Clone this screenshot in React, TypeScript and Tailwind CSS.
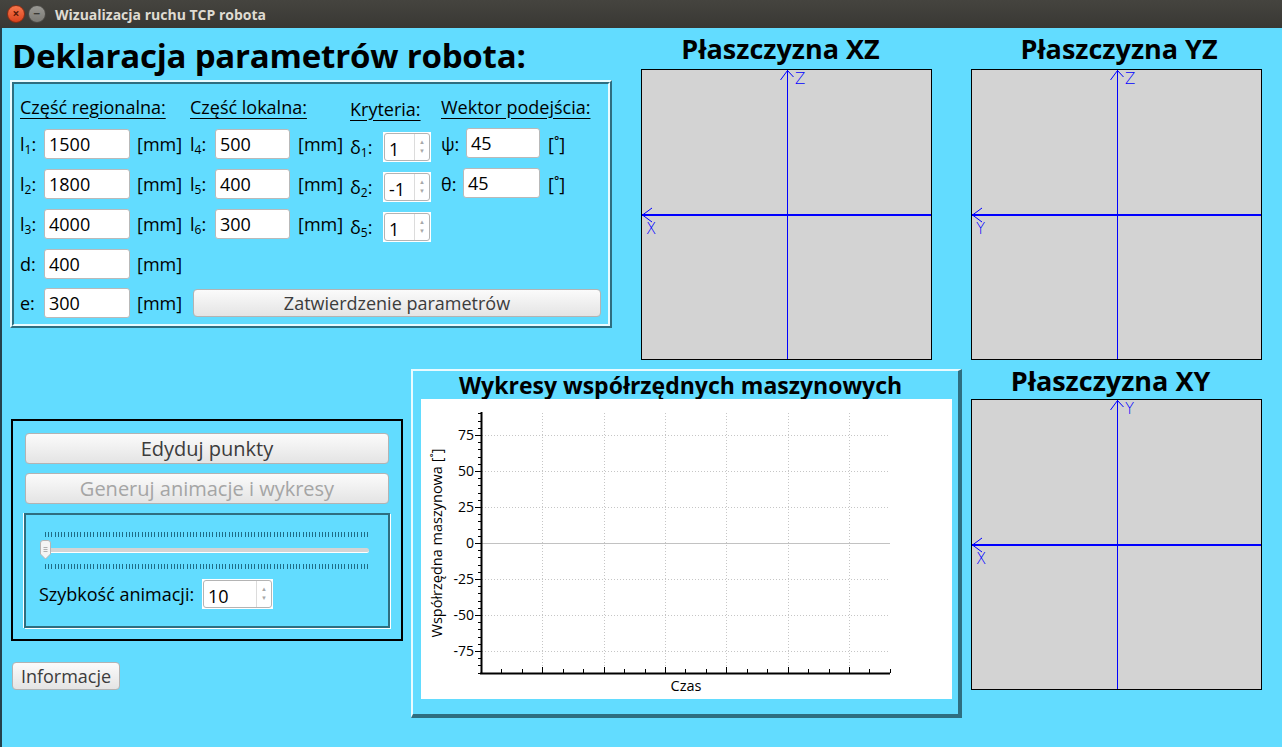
import React from "react";

function Field({ value, className }: { value: string; className: string }) {
  return (
    <div
      className={`h-[30px] bg-white border border-[#b9b9b9] rounded-[3px] pl-[4px] flex items-center text-[18px] text-black ${className}`}
    >
      {value}
    </div>
  );
}

function Spin({ value, className }: { value: string; className: string }) {
  return (
    <div className={`h-[30px] bg-white border border-white flex ${className}`}>
      <div className="flex-1 flex border border-[#b4b4b4] rounded-[3px]">
        <div className="flex-1 flex items-end pb-[2px] pl-[4px] text-[18px] text-black leading-none">{value}</div>
        <div className="w-[15px] border-l border-[#dcdcdc] flex flex-col items-center justify-center text-[#a8a8a8] text-[6px] leading-[9px]">
          <span>▲</span>
          <span>▼</span>
        </div>
      </div>
    </div>
  );
}

function Button({ children, className, disabled }: { children: React.ReactNode; className: string; disabled?: boolean }) {
  return (
    <div
      className={`flex items-center justify-center rounded-[4px] border border-[#b3b3b3] bg-gradient-to-b from-[#fbfbfb] to-[#e4e4e4] ${
        disabled ? "text-[#a5a5a5]" : "text-[#3c3c3c]"
      } ${className}`}
    >
      {children}
    </div>
  );
}

function Sub({ base, sub }: { base: string; sub: string }) {
  return (
    <span>
      {base}
      <sub className="text-[12px] align-baseline relative top-[3px]">{sub}</sub>:
    </span>
  );
}

function Plane({ title, h, v, titleH }: { title: string; h: string; v: string; titleH: string }) {
  const blue = "#0000ff";
  return (
    <div className="w-[291px] flex flex-col">
      <div className={`${titleH} flex items-center justify-center text-[27px] font-bold text-black leading-none`}>{title}</div>
      <div className="h-[291px] border border-black bg-[#d3d3d3]">
        <svg width="289" height="289" className="block">
          <line x1="145.5" y1="0" x2="145.5" y2="289" stroke={blue} strokeWidth="1" />
          <line x1="0" y1="145" x2="289" y2="145" stroke={blue} strokeWidth="2" />
          <polyline points="138.5,10 145.5,0.5 151.5,7" fill="none" stroke={blue} strokeWidth="1" />
          <polyline points="10,138 0.5,145 10,152" fill="none" stroke={blue} strokeWidth="1" />
          <text x="153" y="14" fontSize="15" fill={blue} fontFamily="'DejaVu Sans', sans-serif" fontWeight="200">
            {v}
          </text>
          <text x="4" y="164" fontSize="15" fill={blue} fontFamily="'DejaVu Sans', sans-serif" fontWeight="200">
            {h}
          </text>
        </svg>
      </div>
    </div>
  );
}

function Ticks() {
  const xs = Array.from({ length: 101 }, (_, i) => Math.round(i * 3.22) + 0.5);
  return (
    <svg width="324" height="5" className="block">
      {xs.map((x, i) => (
        <line key={i} x1={x} y1="0" x2={x} y2="5" stroke="#1f6c86" strokeWidth="1" />
      ))}
    </svg>
  );
}

function Chart() {
  const yOf = (v: number) => 144 - v * 1.44;
  const minorY = Array.from({ length: 37 }, (_, i) => -90 + i * 5);
  const majors = [75, 50, 25, 0, -25, -50, -75];
  const step = 61.33;
  const minorX = Array.from({ length: 21 }, (_, i) => 60 + (i * step) / 3);
  return (
    <svg width="531" height="300" className="block">
      {[75, 50, 25, -25, -50, -75].map((v) => (
        <line key={v} x1="61" y1={yOf(v) + 0.5} x2="469" y2={yOf(v) + 0.5} stroke="#c6c6c6" strokeDasharray="1 2" />
      ))}
      {[1, 2, 3, 4, 5, 6].map((k) => (
        <line key={k} x1={Math.round(60 + k * step) + 0.5} y1="14" x2={Math.round(60 + k * step) + 0.5} y2="273" stroke="#c6c6c6" strokeDasharray="1 2" />
      ))}
      <line x1="61" y1="144.5" x2="469" y2="144.5" stroke="#c2c2c2" strokeWidth="1" />
      {minorY.map((v) => (
        <line key={v} x1={v % 25 === 0 ? 54 : 57} y1={Math.round(yOf(v)) + 0.5} x2="60" y2={Math.round(yOf(v)) + 0.5} stroke="#000" />
      ))}
      {minorX.map((x, i) => (
        <line key={i} x1={Math.round(x) + 0.5} y1={i % 3 === 0 ? 268 : 270} x2={Math.round(x) + 0.5} y2="274" stroke="#000" />
      ))}
      <line x1="60.5" y1="13" x2="60.5" y2="275" stroke="#000" strokeWidth="2" />
      <line x1="59" y1="274.5" x2="469" y2="274.5" stroke="#000" strokeWidth="2" />
      {majors.map((v) => (
        <text key={v} x="53" y={yOf(v) + 5} fontSize="14" textAnchor="end" fill="#000" fontFamily="'Open Sans', sans-serif">
          {v}
        </text>
      ))}
      <text x="265" y="292" fontSize="14.5" textAnchor="middle" fill="#000" fontFamily="'Open Sans', sans-serif">
        Czas
      </text>
      <text
        x="0"
        y="0"
        fontSize="14.5"
        textAnchor="middle"
        fill="#000"
        fontFamily="'Open Sans', sans-serif"
        transform="translate(21 144) rotate(-90)"
      >
        Współrzędna maszynowa [˚]
      </text>
    </svg>
  );
}

export default function App() {
  return (
    <div className="w-[1282px] h-[747px] bg-[#62dcff] font-['Open_Sans','Noto_Sans',sans-serif] overflow-hidden flex flex-col shadow-[inset_2px_0_0_#24414c]">
      {/* Title bar */}
      <div className="h-[28px] shrink-0 bg-gradient-to-b from-[#45443f] to-[#393834] flex items-center pl-[7px]">
        <div className="w-[18px] h-[18px] rounded-full bg-gradient-to-b from-[#f7774c] to-[#d9421c] border border-[#8d2c12] flex items-center justify-center text-[#5a1a08] text-[12px] leading-none font-bold">
          ×
        </div>
        <div className="w-[18px] h-[18px] ml-[3px] rounded-full bg-gradient-to-b from-[#9a9994] to-[#7a7974] border border-[#4a4945] flex items-center justify-center text-[#3a3935] text-[12px] leading-none font-bold">
          −
        </div>
        <div className="ml-[9px] text-[14px] font-bold text-[#dfdbd2]">Wizualizacja ruchu TCP robota</div>
      </div>

      {/* Top row */}
      <div className="flex items-start pl-[10px]">
        <div className="w-[602px] flex flex-col">
          <div className="h-[52px] pl-[2px] pt-[8px] text-[33px] font-bold text-black leading-[40px] tracking-[-0.2px]">
            Deklaracja parametrów robota:
          </div>
          <div className="border-2 border-t-[#e9fbff] border-l-[#e9fbff] border-r-[#2e6e80] border-b-[#2e6e80]">
            <div className="h-[244px] border-2 border-t-[#2e6e80] border-l-[#2e6e80] border-r-[#e9fbff] border-b-[#e9fbff] pl-[6px] text-[18px] text-black flex flex-col">
              <div className="flex mt-[11px] h-[24px] items-center">
                <span className="w-[170px]"><span className="underline underline-offset-[4px]">Część regionalna:</span></span>
                <span className="w-[160px]"><span className="underline underline-offset-[4px]">Część lokalna:</span></span>
                <span className="w-[91px] pt-[4px]"><span className="underline underline-offset-[4px]">Kryteria:</span></span>
                <span><span className="underline underline-offset-[4px]">Wektor podejścia:</span></span>
              </div>
              <div className="mt-[10px] flex flex-col gap-[10px]">
                <div className="flex items-center h-[30px]">
                  <span className="w-[24px]"><Sub base="l" sub="1" /></span>
                  <Field value="1500" className="w-[86px]" />
                  <span className="w-[60px] pl-[7px]">[mm]</span>
                  <span className="w-[25px]"><Sub base="l" sub="4" /></span>
                  <Field value="500" className="w-[75px]" />
                  <span className="w-[60px] pl-[8px]">[mm]</span>
                  <span className="w-[33px] pt-[6px]"><Sub base="δ" sub="1" /></span>
                  <Spin value="1" className="w-[48px] mt-[6px]" />
                  <span className="w-[35px] pl-[10px]">ψ:</span>
                  <Field value="45" className="w-[74px] -mt-[2px]" />
                  <span className="pl-[8px]">[˚]</span>
                </div>
                <div className="flex items-center h-[30px]">
                  <span className="w-[24px]"><Sub base="l" sub="2" /></span>
                  <Field value="1800" className="w-[86px]" />
                  <span className="w-[60px] pl-[7px]">[mm]</span>
                  <span className="w-[25px]"><Sub base="l" sub="5" /></span>
                  <Field value="400" className="w-[75px]" />
                  <span className="w-[60px] pl-[8px]">[mm]</span>
                  <span className="w-[33px] pt-[6px]"><Sub base="δ" sub="2" /></span>
                  <Spin value="-1" className="w-[48px] mt-[6px]" />
                  <span className="w-[32px] pl-[10px]">θ:</span>
                  <Field value="45" className="w-[77px] -mt-[2px]" />
                  <span className="pl-[8px]">[˚]</span>
                </div>
                <div className="flex items-center h-[30px]">
                  <span className="w-[24px]"><Sub base="l" sub="3" /></span>
                  <Field value="4000" className="w-[86px]" />
                  <span className="w-[60px] pl-[7px]">[mm]</span>
                  <span className="w-[25px]"><Sub base="l" sub="6" /></span>
                  <Field value="300" className="w-[75px]" />
                  <span className="w-[60px] pl-[8px]">[mm]</span>
                  <span className="w-[33px] pt-[6px]"><Sub base="δ" sub="5" /></span>
                  <Spin value="1" className="w-[48px] mt-[6px]" />
                </div>
                <div className="flex items-center h-[30px]">
                  <span className="w-[24px]">d:</span>
                  <Field value="400" className="w-[86px]" />
                  <span className="w-[60px] pl-[7px]">[mm]</span>
                </div>
                <div className="flex items-center h-[30px] -mt-[1px]">
                  <span className="w-[24px]">e:</span>
                  <Field value="300" className="w-[86px]" />
                  <span className="w-[63px] pl-[7px]">[mm]</span>
                  <Button className="w-[408px] h-[28px] text-[18px]">Zatwierdzenie parametrów</Button>
                </div>
              </div>
            </div>
          </div>
        </div>
        <div className="ml-[29px]">
          <Plane title="Płaszczyzna XZ" h="X" v="Z" titleH="h-[41px] pr-[12px]" />
        </div>
        <div className="ml-[39px]">
          <Plane title="Płaszczyzna YZ" h="Y" v="Z" titleH="h-[41px] pl-[5px]" />
        </div>
      </div>

      {/* Bottom row */}
      <div className="flex items-start pl-[11px] mt-[9px]">
        <div className="w-[392px] flex flex-col mt-[50px]">
          <div className="h-[222px] border-2 border-black px-[12px] pt-[12px] flex flex-col gap-[9px]">
            <Button className="h-[31px] text-[20px]">Edyduj punkty</Button>
            <Button className="h-[31px] text-[20px]" disabled>
              Generuj animacje i wykresy
            </Button>
            <div className="-mx-[1px] h-[115px] border-2 border-[#2e6e80] shadow-[1px_1px_0_#ffffff,-1px_0_0_#ffffff] flex flex-col pl-[19px] pt-[17px]">
              <Ticks />
              <div className="relative h-[27px] w-[330px] -ml-[6px]">
                <div className="absolute left-[5px] right-0 top-[11px] h-[5px] rounded-full bg-[#d4d4d4] border-b border-white" />
                <svg width="13" height="20" className="absolute left-0 top-[3px]">
                  <path d="M1.5 3 Q1.5 0.5 4 0.5 L9 0.5 Q11.5 0.5 11.5 3 L11.5 14 L6.5 19 L1.5 14 Z" fill="#f4f4f4" stroke="#b5b5b5" />
                  <line x1="4.5" y1="7.5" x2="8.5" y2="7.5" stroke="#b0b0b0" />
                  <line x1="4.5" y1="9.5" x2="8.5" y2="9.5" stroke="#b0b0b0" />
                  <line x1="4.5" y1="11.5" x2="8.5" y2="11.5" stroke="#b0b0b0" />
                </svg>
              </div>
              <Ticks />
              <div className="flex items-center mt-[10px] -ml-[6px]">
                <span className="text-[18px] text-black w-[163px]">Szybkość animacji:</span>
                <Spin value="10" className="w-[71px]" />
              </div>
            </div>
          </div>
          <Button className="ml-[1px] mt-[21px] w-[108px] h-[28px] text-[18px]">Informacje</Button>
        </div>

        <div className="ml-[8px] w-[551px] h-[349px] border-l-2 border-t-2 border-l-[#e9fbff] border-t-[#e9fbff] border-r-4 border-b-4 border-r-[#2e6e80] border-b-[#2e6e80] flex flex-col pl-[8px]">
          <div className="h-[28px] flex items-center justify-center pr-[18px] text-[23px] font-bold text-black leading-none">
            Wykresy współrzędnych maszynowych
          </div>
          <div className="w-[531px] h-[300px] bg-white">
            <Chart />
          </div>
        </div>

        <div className="ml-[9px]">
          <Plane title="Płaszczyzna XY" h="X" v="Y" titleH="h-[30px] pb-[8px] pr-[12px]" />
        </div>
      </div>
    </div>
  );
}
